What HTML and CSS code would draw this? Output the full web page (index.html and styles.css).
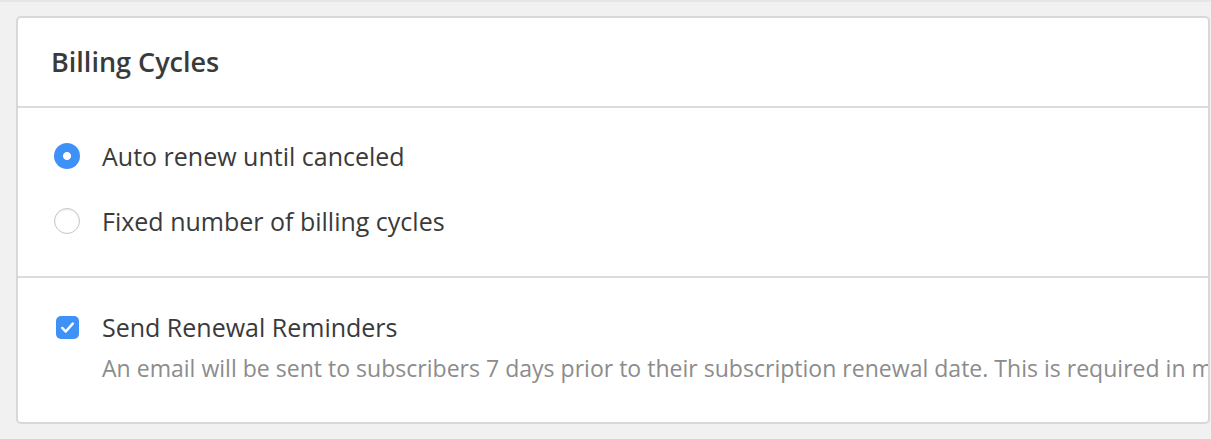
FILE: index.html
```html
<!DOCTYPE html>
<html>
<head>
<meta charset="utf-8">
<link rel="stylesheet" href="styles.css">
</head>
<body>
<div class="page">
  <div class="card">
    <div class="card-header">
      <h2 class="title">Billing Cycles</h2>
    </div>
    <div class="section radios">
      <label class="option">
        <span class="radio radio-on"></span>
        <span class="label">Auto renew until canceled</span>
      </label>
      <label class="option">
        <span class="radio"></span>
        <span class="label">Fixed number of billing cycles</span>
      </label>
    </div>
    <div class="section reminders">
      <div class="option">
        <span class="checkbox">
          <svg viewBox="0 0 24 24" width="23" height="23"><path d="M6.5 12.5 L10.2 16.2 L17.5 8" fill="none" stroke="#fff" stroke-width="2.6" stroke-linecap="round" stroke-linejoin="round"/></svg>
        </span>
        <span class="label">Send Renewal Reminders</span>
      </div>
      <p class="help">An email will be sent to subscribers 7 days prior to their subscription renewal date. This is required in many jurisdictions.</p>
    </div>
  </div>
</div>
</body>
</html>
```
FILE: styles.css
```css
html, body {
  margin: 0;
  padding: 0;
}
body {
  background: #f1f1f1;
  font-family: "Open Sans", "Lato", sans-serif;
  overflow: hidden;
  width: 1211px;
  height: 439px;
}
.page {
  border-top: 2px solid #e6e6e6;
  padding: 14px 1px 0 16px;
}
.card {
  background: #fff;
  border: 2px solid #d8d8d8;
  border-radius: 5px;
  overflow: hidden;
  box-sizing: border-box;
  height: 408px;
}
.card-header {
  border-bottom: 2px solid #dcdcdc;
  display: flex;
  align-items: center;
  padding-left: 33px;
  box-sizing: border-box;
  height: 90px;
}
.title {
  margin: 0 0 1px 0;
  font-size: 27px;
  font-weight: 600;
  color: #3a3a3a;
  letter-spacing: 0;
}
.section {
  padding-left: 36px;
}
.radios {
  border-bottom: 2px solid #dcdcdc;
  height: 170px;
  box-sizing: border-box;
  padding-top: 35px;
  display: flex;
  flex-direction: column;
  gap: 39px;
}
.option {
  display: flex;
  align-items: center;
  gap: 22px;
  white-space: nowrap;
}
.label {
  font-size: 25px;
  color: #3a3a3a;
  line-height: 26px;
}
.radio {
  width: 26px;
  height: 26px;
  border-radius: 50%;
  box-sizing: border-box;
  border: 1.5px solid #c6c6c6;
  background: #fff;
  box-shadow: inset 0 1px 2px rgba(0,0,0,0.08);
  flex: none;
}
.radio-on {
  border: none;
  background: radial-gradient(circle, #fff 0, #fff 3.6px, #3d91f7 4.4px);
  box-shadow: none;
}
.reminders {
  padding-top: 36px;
}
.checkbox {
  width: 23px;
  height: 23px;
  border-radius: 5px;
  background: #3d91f7;
  margin-left: 2px;
  margin-right: 1px;
  flex: none;
  display: flex;
}
.help {
  margin: 14px 0 0 48px;
  font-size: 23.05px;
  line-height: 28px;
  color: #8c8c8c;
  white-space: nowrap;
}
```
